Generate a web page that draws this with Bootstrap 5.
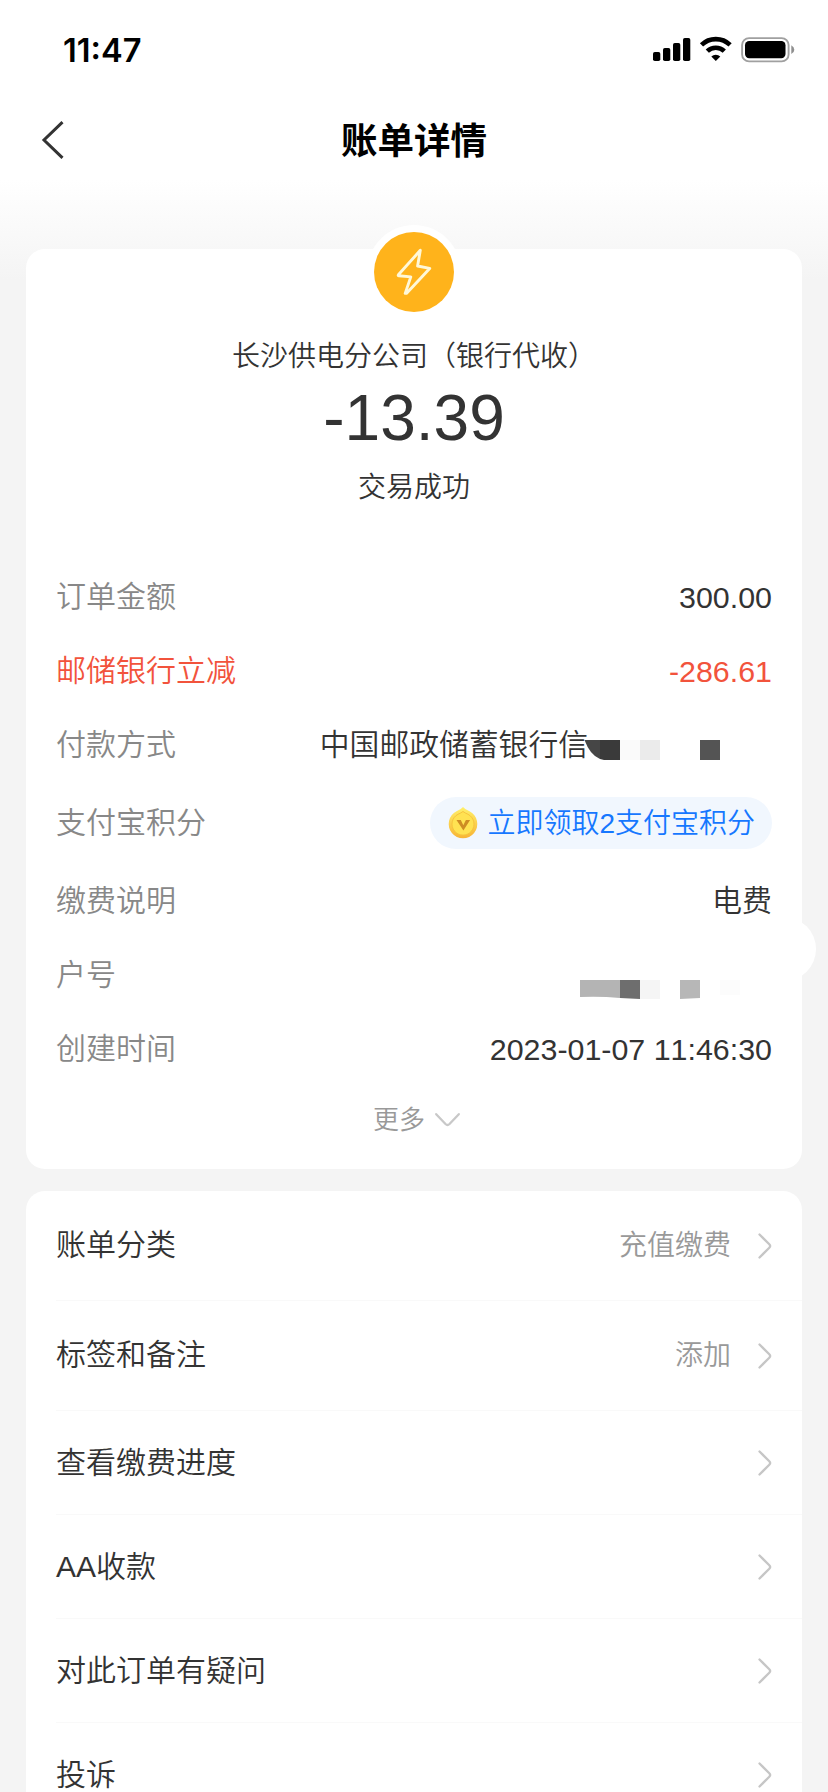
<!DOCTYPE html>
<html lang="zh-CN">
<head>
<meta charset="utf-8">
<meta name="viewport" content="width=device-width, initial-scale=1">
<title>账单详情</title>
<link rel="stylesheet" href="https://cdn.jsdelivr.net/npm/bootstrap@5.3.0/dist/css/bootstrap.min.css">
<style>
  body {
    height: 1792px; overflow: hidden; color: #333; font-size: 30px; font-weight: 350; line-height: 40px;
    font-family: "Liberation Sans", "Noto Sans CJK SC", sans-serif; font-kerning: none;
    background: linear-gradient(#fff 180px, #f4f4f4 280px);
  }
  svg { display: block; flex: none; overflow: visible; }
  .status-bar { height: 98px; padding: 2px 33px 0 63px; }
  .clock { font: 600 32.6px/96px Inter, sans-serif; color: #000; }
  .title-bar { height: 84px; padding: 0 42px; }
  .title-bar h1 { font-size: 36.5px; font-weight: 600; color: #000; line-height: 48px; padding-top: 3px; }
  .page { padding: 67px 26px 0; gap: 22px; }
  .panel { border: 0; border-radius: 19px; }
  .bill { height: 920px; }
  .merchant-icon { width: 94px; height: 94px; margin-top: -24px; background: #fff; padding: 7px; }
  .merchant-icon > div { background: #ffb31b; }
  .merchant { font-size: 28px; margin-top: 18px; }
  .amount { font-size: 64px; line-height: 72px; margin-top: 5px; }
  .state { font-size: 28px; margin-top: 14px; }
  .details { padding: 52px 30px 0; }
  .detail { height: 74px; color: #888; }
  .detail > :last-child { color: #333; }
  .detail.promo, .detail.promo > :last-child { color: #f2533c; }
  .detail.tall { height: 82px; }
  .detail .payee { font-size: 29.8px; }
  .detail .points { height: 52px; background: #f1f7fe; color: #1677ff; font-size: 28px; padding: 0 17px 0 18px; gap: 9px; }
  .points span { padding-top: 1px; }
  .num { font-size: 30.4px; }
  .more { font-size: 26px; color: #999; gap: 10px; margin-top: 14px; padding-left: 5px; line-height: 40px; }
  .actions { height: 640px; }
  .action { height: 104px; margin-left: 30px; padding: 0 30px 0 0; border: 0; border-bottom: 2px solid #f9f9f9; background: none; color: #333; }
  .action.roomy { height: 110px; }
  .action.roomy .me-auto { padding-bottom: 2px; }
  .action .hint { color: #999; font-size: 28px; margin-right: 27px; }
  .assist { position: absolute; width: 64px; height: 64px; right: -14px; top: 668px; background: #fff; z-index: 1; }
</style>
</head>
<body>
<header>
  <div class="status-bar d-flex justify-content-between align-items-center">
    <span class="clock">11:47</span>
    <svg width="142" height="26" viewBox="0 0 142 26">
      <rect x="0" y="15" width="7.3" height="9" rx="1.8"/><rect x="10" y="11" width="7.3" height="13" rx="1.8"/>
      <rect x="20" y="6" width="7.3" height="18" rx="1.8"/><rect x="30" y="1" width="7.3" height="23" rx="1.8"/>
      <g fill="none" stroke="#000" stroke-width="4.6"><path d="M48.5 7.9a20.5 20.5 0 0 1 28.6 0"/><path d="M54.3 14.2a12.2 12.2 0 0 1 17 0"/></g>
      <path d="M58.3 19.6a6.6 6.6 0 0 1 9 0L62.8 24z"/>
      <rect x="89.1" y="1.1" width="46.5" height="23.3" rx="7" fill="none" stroke="#a0a0a0" stroke-width="1.9"/>
      <rect x="92" y="4" width="40.5" height="17.2" rx="4.2"/><path d="M138.3 8.3q3 1.6 3 4.4t-3 4.4z" fill="#8f8f8f"/>
    </svg>
  </div>
  <div class="title-bar d-flex align-items-center justify-content-between">
    <svg width="22" height="38" viewBox="0 0 22 38" fill="none" stroke="#333" stroke-width="3"><path d="M20.5 1.2 2 19l18.5 17.8"/></svg>
    <h1 class="m-0">账单详情</h1>
    <span style="width:22px"></span>
  </div>
</header>
<main class="page d-flex flex-column">
  <section class="card panel bill">
    <div class="assist rounded-circle"></div>
    <div class="d-flex flex-column align-items-center">
      <div class="merchant-icon rounded-circle">
        <div class="rounded-circle w-100 h-100">
          <svg width="80" height="80" viewBox="0 0 80 80" fill="none" stroke="#fff8d8" stroke-width="2.9" stroke-linejoin="round"><path d="M46.300 18.300 24.400 42.800Q23.800 43.600 25 43.800L36.800 44.900 31.200 61.400 32.400 61.400 55.700 36.400 43.600 34Z"/></svg>
        </div>
      </div>
      <div class="merchant">长沙供电分公司（银行代收）</div>
      <div class="amount">-13.39</div>
      <div class="state">交易成功</div>
    </div>
    <div class="details">
      <div class="detail d-flex justify-content-between align-items-center"><span>订单金额</span><span class="num">300.00</span></div>
      <div class="detail promo d-flex justify-content-between align-items-center"><span>邮储银行立减</span><span class="num">-286.61</span></div>
      <div class="detail d-flex justify-content-between align-items-center"><span>付款方式</span>
        <span class="payee d-flex align-items-center">中国邮政储蓄银行信
          <svg width="184" height="40" viewBox="0 1 184 40"><path d="M-3.500 16H12V35Q2 31-3.500 16z" fill="#464646"/><path d="M12 16h20v20H16l-4-1z" fill="#3a3a3a"/><path d="M32 16h20v20H32z" fill="#fafafa"/><path d="M52 16h20v20H52z" fill="#ebebeb"/><path d="M112 16h20v20h-20z" fill="#545454"/></svg>
        </span></div>
      <div class="detail tall d-flex justify-content-between align-items-center"><span>支付宝积分</span>
        <span class="points rounded-pill d-flex align-items-center">
          <svg width="30" height="32" viewBox="0 0 30 32">
            <defs><linearGradient id="coin" x2="0" y2="1"><stop stop-color="#fff06a"/><stop offset="1" stop-color="#f8b435"/></linearGradient></defs>
            <path d="M15 0Q17 2.500 21.500 4.300A14.300 14.300 0 1 1 8.500 4.300Q13 2.500 15 0z" fill="url(#coin)"/>
            <path d="M15 4.500Q17 6 20 7.300A11 11 0 1 1 10 7.300Q13 6 15 4.500z" fill="#ffe252" stroke="#f6c43c"/>
            <path d="M8.500 13h4.300l2.500 5.300L17.900 13h4.200l-6.700 10.500z" fill="#ce8c23"/>
          </svg>
          <span>立即领取2支付宝积分</span>
        </span></div>
      <div class="detail d-flex justify-content-between align-items-center"><span>缴费说明</span><span>电费</span></div>
      <div class="detail d-flex justify-content-between align-items-center"><span>户号</span>
        <svg width="192" height="40" viewBox="0 1 192 40"><path d="M0 26h40v18Q20 42 0 43z" fill="#b4b4b4"/><path d="M40 26h20v19l-20-1z" fill="#6e6e6e"/><path d="M60 26h20v19H60z" fill="#f5f5f5"/><path d="M100 26h20v18l-20 1z" fill="#b7b7b7"/><path d="M140 26h20v15h-20z" fill="#fcfcfc"/></svg></div>
      <div class="detail d-flex justify-content-between align-items-center"><span>创建时间</span><span class="num">2023-01-07 11:46:30</span></div>
    </div>
    <div class="more d-flex justify-content-center align-items-center"><span>更多</span>
      <svg width="25" height="14" viewBox="0 0 25 14" fill="none" stroke="#c8c8c8" stroke-width="2.300" stroke-linecap="round"><path d="M1.200 1.200 10.500 11q2 2 4 0L23.800 1.200"/></svg></div>
  </section>
  <section class="card panel actions">
    <svg width="0" height="0"><symbol id="go" viewBox="0 0 14 26"><path d="M1.500 1.500 11.300 11.300q1.700 1.700 0 3.400L1.500 24.500" fill="none" stroke="#c6c6c6" stroke-width="2.300" stroke-linecap="round"/></symbol></svg>
    <div class="list-group list-group-flush">
      <a class="list-group-item action roomy d-flex align-items-center"><span class="me-auto">账单分类</span><span class="hint">充值缴费</span><svg width="14" height="26"><use href="#go"/></svg></a>
      <a class="list-group-item action roomy d-flex align-items-center"><span class="me-auto">标签和备注</span><span class="hint">添加</span><svg width="14" height="26"><use href="#go"/></svg></a>
      <a class="list-group-item action d-flex align-items-center"><span class="me-auto">查看缴费进度</span><svg width="14" height="26"><use href="#go"/></svg></a>
      <a class="list-group-item action d-flex align-items-center"><span class="me-auto">AA收款</span><svg width="14" height="26"><use href="#go"/></svg></a>
      <a class="list-group-item action d-flex align-items-center"><span class="me-auto">对此订单有疑问</span><svg width="14" height="26"><use href="#go"/></svg></a>
      <a class="list-group-item action d-flex align-items-center"><span class="me-auto">投诉</span><svg width="14" height="26"><use href="#go"/></svg></a>
    </div>
  </section>
</main>
<script src="https://cdn.jsdelivr.net/npm/bootstrap@5.3.0/dist/js/bootstrap.bundle.min.js"></script>
</body>
</html>
